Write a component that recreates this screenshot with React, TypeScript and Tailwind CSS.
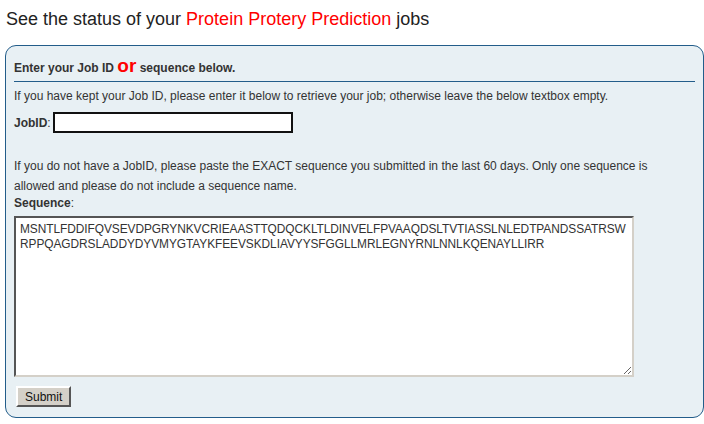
import React from "react";

export default function App() {
  const seq =
    "MSNTLFDDIFQVSEVDPGRYNKVCRIEAASTTQDQCKLTLDINVELFPVAAQDSLTVTIASSLNLEDTPANDSSATRSWRPPQAGDRSLADDYDYVMYGTAYKFEEVSKDLIAVYYSFGGLLMRLEGNYRNLNNLKQENAYLLIRR";
  return (
    <div className="w-[704px] h-[424px] bg-white overflow-hidden text-[#333] [font-family:'Liberation_Sans',Arial,sans-serif]">
      <div className="pl-[6px] pt-[9px] text-[18px] leading-[20px] text-[#222]">
        See the status of your <span className="text-[#ff0000]">Protein Protery Prediction</span> jobs
      </div>
      <div className="ml-[5px] mt-[16px] w-[699px] h-[373px] border-[1.5px] border-[#235d8a] rounded-[11px] bg-[#e8f0f4] px-[8px]">
        <div className="pt-[13px] pb-[4px] text-[12px] font-bold text-[#333] border-b-[1.5px] border-[#235d8a] leading-[18px]">
          Enter your Job ID <span className="text-[#ff0000] text-[19px] leading-[14px]">or</span> sequence below.
        </div>
        <div className="mt-[6px] text-[12px] leading-[16px]">
          If you have kept your Job ID, please enter it below to retrieve your job; otherwise leave the below textbox empty.
        </div>
        <div className="mt-[8px] flex items-center text-[12px]">
          <span className="font-bold">JobID</span>
          <span className="mr-[2px]">:</span>
          <input className="w-[240px] h-[21px] border-2 border-[#111] bg-white" />
        </div>
        <div className="mt-[23px] text-[12px] leading-[20px] w-[664px]">
          If you do not have a JobID, please paste the EXACT sequence you submitted in the last 60 days. Only one sequence is allowed and please do not include a sequence name.
        </div>
        <div className="text-[12px] leading-[16px] -mt-[1px]">
          <span className="font-bold">Sequence</span>:
        </div>
        <textarea
          readOnly
          defaultValue={seq}
          className="block mt-[5px] w-[620px] h-[161px] bg-white border-2 border-t-[#555] border-l-[#555] border-b-[#d4d0c8] border-r-[#d4d0c8] pl-[4px] pr-0 py-[4px] text-[11.9px] tracking-[-0.06px] leading-[15px] text-[#333] resize break-all overflow-hidden [font-family:'Liberation_Sans',Arial,sans-serif]"
        />
        <button className="mt-[9px] ml-[2px] h-[21px] px-[7px] bg-[#d4d0c8] text-[12px] text-[#111] border-2 border-t-[#fff] border-l-[#fff] border-b-[#555] border-r-[#555]">
          Submit
        </button>
      </div>
    </div>
  );
}
